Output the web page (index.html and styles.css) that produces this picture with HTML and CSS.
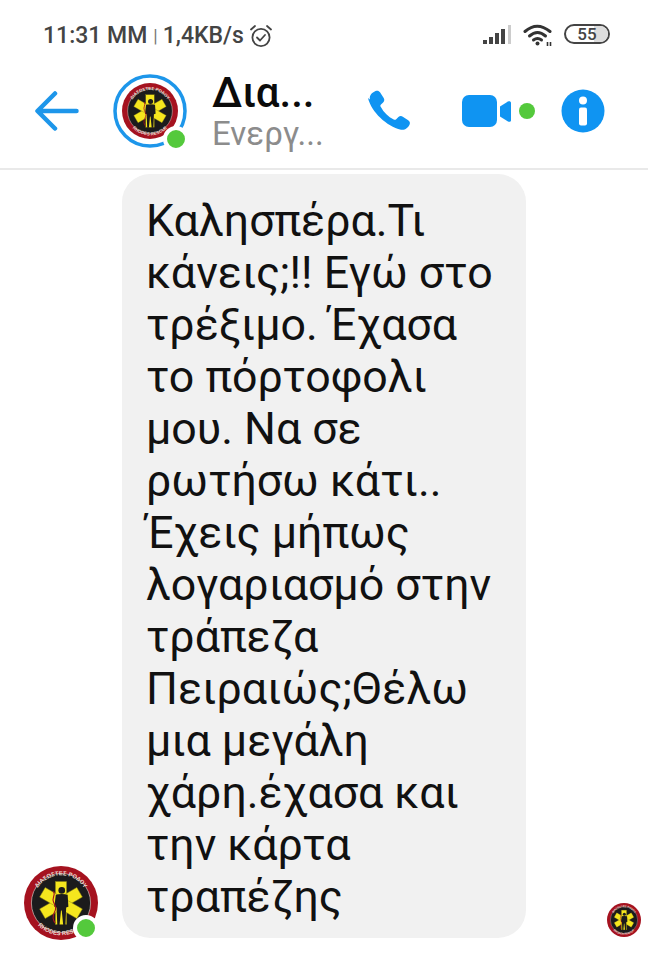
FILE: index.html
```html
<!DOCTYPE html>
<html lang="el">
<head>
	<meta charset="UTF-8">
	<title>Messenger</title>
	<link rel="stylesheet" href="styles.css">
</head>
<body>
<svg class="defs" width="0" height="0">
	<defs>
		<path id="arc-top" d="M12.500 50a37.500 37.500 0 0 1 75 0"/>
		<path id="arc-bottom" d="M6.500 50a43.500 43.500 0 0 0 87 0"/>
		<symbol id="logo" viewBox="0 0 100 100">
			<circle cx="50" cy="50" r="50" fill="#a5121f"/>
			<circle cx="50" cy="50" r="40" fill="#1b1b1c" stroke="#e8e4dc" stroke-width=".8"/>
			<text class="logo-text"><textPath href="#arc-top" startOffset="50%" text-anchor="middle">ΔΙΑΣΩΣΤΕΣ ΡΟΔΟΥ</textPath></text>
			<text class="logo-text"><textPath href="#arc-bottom" startOffset="50%" text-anchor="middle">RHODES RESCUE</textPath></text>
			<g fill="#f5e61e" stroke="#8d8412" stroke-width=".6">
				<rect x="42.500" y="21" width="15" height="58"/>
				<rect x="42.500" y="21" width="15" height="58" transform="rotate(60 50 50)"/>
				<rect x="42.500" y="21" width="15" height="58" transform="rotate(120 50 50)"/>
			</g>
			<g fill="#1b1b1c">
				<circle cx="51" cy="33" r="4.500"/>
				<path d="M43 39q8-2 16 0l1 16-3 1-1 24h-3l-2-20h-1l-2 20h-3l-1-24-3-1z"/>
			</g>
			<path d="M40 34c3 6-3 9 0 15s4 8 1 14-2 10 1 14" fill="none" stroke="#a5121f" stroke-width="1.500"/>
		</symbol>
	</defs>
</svg>

<div class="status-bar">
	<span class="clock">11:31 MM</span>
	<span class="sep">|</span>
	<span class="speed">1,4KB/s</span>
	<svg class="alarm" width="24" height="24" viewBox="0 0 24 24" fill="none" stroke="#444" stroke-width="1.800" stroke-linecap="round" stroke-linejoin="round">
		<circle cx="12" cy="13.500" r="8.600"/>
		<path d="M8 13.500l3 3 5-5.500"/>
		<path d="M2 5.500L6 2M22 5.500L18 2"/>
	</svg>
	<svg class="signal" width="30" height="20" viewBox="0 0 30 20">
		<rect x="0" y="15" width="4" height="4" fill="#444"/>
		<rect x="6" y="12" width="4" height="7" fill="#444"/>
		<rect x="12" y="8" width="4" height="11" fill="#444"/>
		<rect x="18" y="4" width="4" height="15" fill="#444"/>
		<rect x="25" y="0" width="3" height="19" fill="#ccc"/>
	</svg>
	<svg class="wifi" width="30" height="23" viewBox="0 0 30 23" fill="none" stroke="#333" stroke-width="3" stroke-linecap="round">
		<path d="M2 7.500q12-10.500 25 0"/>
		<path d="M6.500 12q8-7 16 0"/>
		<path d="M10.500 16q4-3 8 0"/>
		<circle cx="14.500" cy="19.500" r="2" fill="#333" stroke="none"/>
		<path d="M24.500 18v4M27.500 18v4" stroke-width="1.600" stroke-linecap="butt"/>
	</svg>
	<div class="battery"><span class="battery-level"></span><span class="battery-num">55</span></div>
</div>

<header class="chat-header">
	<svg class="back" width="44" height="40" viewBox="0 0 44 40" fill="none" stroke="#1d96ea" stroke-width="4.500" stroke-linecap="round" stroke-linejoin="round">
		<path d="M41.500 20H3M20 2.500L2.500 20 20 37.500"/>
	</svg>
	<div class="head-avatar">
		<svg class="story" width="74" height="74" viewBox="0 0 74 74"><circle cx="37" cy="37" r="35" fill="none" stroke="#1d96ea" stroke-width="3.500"/></svg>
		<svg class="head-logo" width="56" height="56"><use href="#logo"/></svg>
		<span class="online head-online"></span>
	</div>
	<div class="names">
		<div class="name">Δια...</div>
		<div class="active">Ενεργ...</div>
	</div>
	<svg class="phone" width="44" height="42" viewBox="0 0 44 42">
		<path fill="#0f94f2" d="M2 9.500C1 5.500 4 2.500 7.500 1c2-.8 3.500-.2 4.500 1.300l3.700 5.700c1 1.600.700 3.200-.600 4.400l-2.100 2c-.700.700-.800 1.500-.300 2.400 3.300 6 7.500 10 13 12.700 1 .500 1.800.400 2.500-.300l2.200-2.100c1.300-1.200 2.900-1.400 4.400-.400l5.400 3.500c1.700 1.100 2.200 2.700 1.300 4.500-1.500 3-4.700 5.800-8.500 5-14.500-3.500-29.500-17.500-33-31.700z"/>
	</svg>
	<svg class="video" width="50" height="33" viewBox="0 0 50 33">
		<rect x="0" y="0" width="35" height="32" rx="7" fill="#0f94f2"/>
		<path fill="#0f94f2" d="M38 11.500l8-5c1.300-.800 3-.200 3 1.300v17.400c0 1.500-1.700 2.100-3 1.300l-8-5z"/>
	</svg>
	<span class="video-dot"></span>
	<svg class="info" width="44" height="44" viewBox="0 0 44 44">
		<circle cx="22" cy="22" r="21.500" fill="#0f94f2"/>
		<circle cx="22" cy="11.500" r="4" fill="#fff"/>
		<rect x="18" y="18.500" width="8" height="18" rx="2" fill="#fff"/>
	</svg>
</header>

<main class="thread">
	<div class="sender">
		<svg class="sender-logo" width="74" height="74"><use href="#logo"/></svg>
		<span class="online sender-online"></span>
	</div>
	<div class="bubble">Καλησπέρα.Τι κάνεις;!! Εγώ στο τρέξιμο. Έχασα το πόρτοφολι μου. Να σε ρωτήσω κάτι.. Έχεις μήπως λογαριασμό στην τράπεζα Πειραιώς;Θέλω μια μεγάλη χάρη.έχασα και την κάρτα τραπέζης</div>
	<svg class="seen" width="34" height="34"><use href="#logo"/></svg>
</main>
</body>
</html>
```

FILE: styles.css
```css
* {
	margin: 0;
	padding: 0;
	box-sizing: border-box;
}
body {
	width: 648px;
	height: 960px;
	background: #fff;
	font-family: "Roboto", "Liberation Sans", sans-serif;
	overflow: hidden;
}
.defs {
	display: block;
	height: 0;
}
.logo-text {
	font-family: "Liberation Sans", sans-serif;
	font-size: 8px;
	font-weight: bold;
	fill: #eddcd2;
}

.status-bar {
	height: 70px;
	padding: 24px 38px 0 43px;
	display: flex;
	align-items: flex-start;
	color: #444;
	font-size: 23px;
	font-weight: 500;
	line-height: 24px;
}
.sep {
	margin-left: 6px;
	font-weight: 400;
	font-size: 18px;
	color: #777;
}
.speed {
	margin-left: 5px;
}
.alarm {
	margin-left: 5px;
}
.signal {
	margin-left: auto;
	margin-top: 1px;
}
.wifi {
	margin-left: 10px;
}
.battery {
	position: relative;
	margin-left: 11px;
	width: 46px;
	height: 20px;
	border: 2px solid #444;
	border-radius: 10px;
	overflow: hidden;
	display: flex;
	align-items: center;
	justify-content: center;
}
.battery-level {
	position: absolute;
	top: 0;
	right: 0;
	bottom: 0;
	width: 14px;
	background: #ddd;
}
.battery-num {
	position: relative;
	font-size: 17px;
	line-height: 16px;
	color: #444;
}

.chat-header {
	height: 100px;
	padding-left: 35px;
	display: flex;
	align-items: center;
	border-bottom: 2px solid #e9e9e9;
	padding-bottom: 16px;
}
.head-avatar {
	position: relative;
	width: 74px;
	height: 74px;
	margin-left: 34px;
	display: flex;
	align-items: center;
	justify-content: center;
}
.story {
	position: absolute;
	top: 0;
	left: 0;
}
.online {
	position: absolute;
	border-radius: 50%;
	background: #54c93c;
	border: 4px solid #fff;
	box-sizing: content-box;
}
.head-online {
	width: 18px;
	height: 18px;
	right: -2px;
	bottom: -4px;
}
.names {
	width: 156px;
	margin-left: 25px;
}
.name {
	font-size: 42px;
	line-height: 46px;
	font-weight: 500;
	color: #0b0b0b;
}
.active {
	font-size: 33px;
	line-height: 36px;
	color: #8c8c8c;
}
.phone {
	flex: none;
}
.video {
	flex: none;
	margin-left: 50px;
}
.video-dot {
	flex: none;
	width: 16px;
	height: 16px;
	margin-left: 7px;
	border-radius: 50%;
	background: #54c93c;
}
.info {
	flex: none;
	margin-left: 26px;
}

.thread {
	display: flex;
	align-items: flex-end;
	padding: 4px 0 0 24px;
}
.sender {
	position: relative;
	flex: none;
	width: 74px;
	height: 74px;
	margin-bottom: -2px;
}
.sender-online {
	width: 18px;
	height: 18px;
	right: -1px;
	bottom: -1px;
}
.bubble {
	flex: none;
	width: 404px;
	height: 764px;
	margin-left: 24px;
	padding: 21px 24px 0 24px;
	background: #f1f1f1;
	border-radius: 28px;
	font-size: 44.700px;
	line-height: 52px;
	color: #111;
}
.seen {
	flex: none;
	margin-left: 81px;
	margin-bottom: 1px;
}
```
